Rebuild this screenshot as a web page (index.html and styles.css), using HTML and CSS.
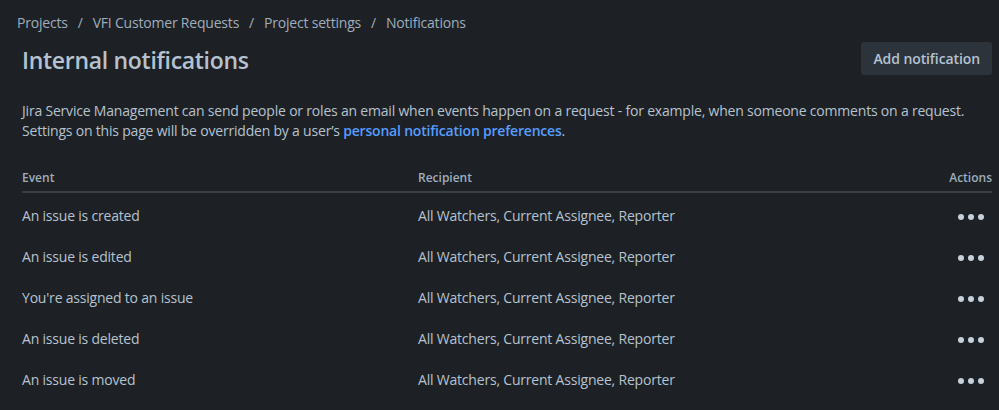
FILE: index.html
```html
<!DOCTYPE html>
<html lang="en">
<head>
<meta charset="utf-8">
<title>Internal notifications</title>
<link rel="stylesheet" href="styles.css">
</head>
<body>
<div class="page">
  <nav class="crumbs">
    <a href="#">Projects</a><span class="sep">/</span>
    <a href="#">VFI Customer Requests</a><span class="sep">/</span>
    <a href="#">Project settings</a><span class="sep">/</span>
    <a href="#">Notifications</a>
  </nav>
  <div class="head">
    <h1>Internal notifications</h1>
    <button class="btn">Add notification</button>
  </div>
  <p class="desc">Jira Service Management can send people or roles an email when events happen on a request - for example, when someone comments on a request.<br>Settings on this page will be overridden by a user’s <a href="#" class="link">personal notification preferences</a>.</p>
  <table class="tbl">
    <thead>
      <tr><th class="c-ev">Event</th><th class="c-rc">Recipient</th><th class="c-ac">Actions</th></tr>
    </thead>
    <tbody>
      <tr><td>An issue is created</td><td>All Watchers, Current Assignee, Reporter</td><td class="c-ac"><span class="more"><i></i><i></i><i></i></span></td></tr>
      <tr><td>An issue is edited</td><td>All Watchers, Current Assignee, Reporter</td><td class="c-ac"><span class="more"><i></i><i></i><i></i></span></td></tr>
      <tr><td>You're assigned to an issue</td><td>All Watchers, Current Assignee, Reporter</td><td class="c-ac"><span class="more"><i></i><i></i><i></i></span></td></tr>
      <tr><td>An issue is deleted</td><td>All Watchers, Current Assignee, Reporter</td><td class="c-ac"><span class="more"><i></i><i></i><i></i></span></td></tr>
      <tr><td>An issue is moved</td><td>All Watchers, Current Assignee, Reporter</td><td class="c-ac"><span class="more"><i></i><i></i><i></i></span></td></tr>
    </tbody>
  </table>
</div>
</body>
</html>
```
FILE: styles.css
```css
html, body {
  margin: 0;
  padding: 0;
  background: #1d2125;
}
body {
  font-family: "Open Sans", "Noto Sans", sans-serif;
  color: #b6c2cf;
  font-size: 14px;
  letter-spacing: -0.2px;
}
.page {
  padding: 13px 7px 0 22px;
}
.crumbs {
  margin-left: -5px;
  font-size: 14px;
  line-height: 20px;
  color: #9fadbc;
  display: flex;
  align-items: center;
}
.crumbs a {
  color: #9fadbc;
  text-decoration: none;
}
.crumbs .sep {
  padding: 0 10px;
}
.head {
  display: flex;
  justify-content: space-between;
  align-items: center;
  margin-top: 9px;
}
h1 {
  margin: 0;
  font-size: 23px;
  font-weight: 600;
  line-height: 32px;
  letter-spacing: -0.3px;
  color: #b6c2cf;
  position: relative;
  top: 1px;
}
.btn {
  font-family: inherit;
  font-size: 14px;
  font-weight: 600;
  letter-spacing: -0.1px;
  color: #b6c2cf;
  background: #2c333a;
  border: 0;
  border-radius: 3px;
  height: 33px;
  padding: 0 12px;
}
.desc {
  margin: 26px 0 0;
  font-size: 14px;
  line-height: 20px;
}
.link {
  color: #579dff;
  font-weight: 600;
  text-decoration: none;
}
.tbl {
  width: 100%;
  border-collapse: collapse;
  margin-top: 25px;
}
.tbl th {
  font-size: 12px;
  font-weight: 600;
  letter-spacing: 0;
  color: #9fadbc;
  text-align: left;
  padding: 4px 0 5px;
  line-height: 16px;
  border-bottom: 2px solid #38414a;
}
.tbl td {
  font-size: 14px;
  line-height: 20px;
  padding: 13px 0 8px;
}
.c-ev { width: 396px; }
.tbl .c-ac { text-align: right; }
.more {
  display: inline-flex;
  gap: 4px;
  margin-right: 8px;
  vertical-align: middle;
}
.more i {
  width: 6px;
  height: 6px;
  border-radius: 50%;
  background: #c7d1db;
}
```
